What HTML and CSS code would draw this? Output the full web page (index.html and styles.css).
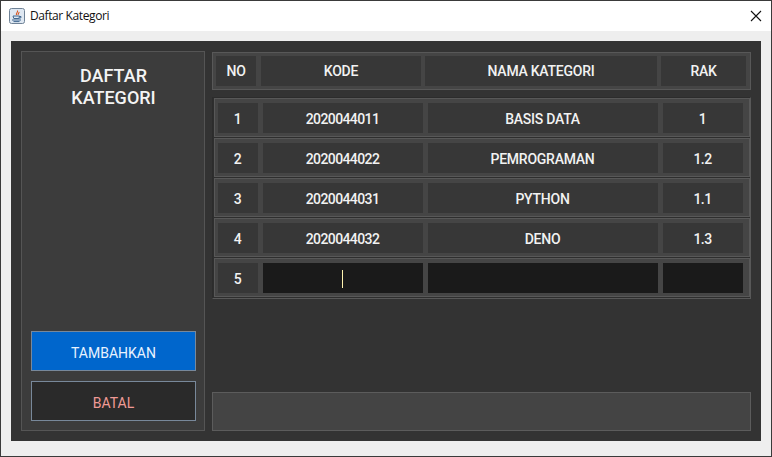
FILE: index.html

```html
<!DOCTYPE html>
<html>
<head>
  <meta charset="UTF-8">
  <title>Daftar Kategori</title>
  <link rel="stylesheet" href="styles.css">
</head>
<body>

<div class="window">
  <div class="titlebar">
    <svg class="appIcon" width="16" height="16" viewBox="0 0 16 16">
      <rect x="0.5" y="0.5" width="15" height="15" rx="2" fill="#dfe8f2" stroke="#6f8296"/>
      <path d="M8.500 2.500c1 1.500-2 2.500-1 4.500M10 4c.5 1-1.500 1.500-.8 3" fill="none" stroke="#d9541e" stroke-width="1.100"/>
      <path d="M4 8h6.500l-.6 2.500H4.800zM10.500 8.500h1.500v1.200l-1.800.6" fill="none" stroke="#41678f"/>
      <path d="M3 12h9M4.500 13.600h6" stroke="#41678f"/>
    </svg>
    <span class="titleText">Daftar Kategori</span>
    <svg class="closeIcon" width="12" height="12" viewBox="0 0 12 12">
      <path d="M1 1l10 10M11 1L1 11" stroke="#111" stroke-width="1.100" fill="none"/>
    </svg>
  </div>

  <div class="content">
    <div class="panel">
      <div class="sidePanel">
        <h2 class="sideTitle">DAFTAR<br>KATEGORI</h2>
        <button class="btn btnAdd">TAMBAHKAN</button>
        <button class="btn btnCancel">BATAL</button>
      </div>

      <div class="mainPanel">
        <div class="headRow">
          <div class="cell">NO</div>
          <div class="cell">KODE</div>
          <div class="cell">NAMA KATEGORI</div>
          <div class="cell">RAK</div>
        </div>

        <div class="tableBody">
          <div class="row">
            <div class="cell num">1</div>
            <div class="cell num">2020044011</div>
            <div class="cell">BASIS DATA</div>
            <div class="cell num">1</div>
          </div>
          <div class="row">
            <div class="cell num">2</div>
            <div class="cell num">2020044022</div>
            <div class="cell">PEMROGRAMAN</div>
            <div class="cell num">1.2</div>
          </div>
          <div class="row">
            <div class="cell num">3</div>
            <div class="cell num">2020044031</div>
            <div class="cell">PYTHON</div>
            <div class="cell num">1.1</div>
          </div>
          <div class="row">
            <div class="cell num">4</div>
            <div class="cell num">2020044032</div>
            <div class="cell">DENO</div>
            <div class="cell num">1.3</div>
          </div>
          <div class="row">
            <div class="cell num">5</div>
            <div class="cell cellInput"><span class="caret"></span></div>
            <div class="cell cellInput"></div>
            <div class="cell cellInput"></div>
          </div>
        </div>

        <div class="messageBar"></div>
      </div>
    </div>
  </div>
</div>

</body>
</html>
```

FILE: styles.css

```css
body, html {
  margin: 0;
  padding: 0;
  height: 100%;
  font-family: Roboto, "Liberation Sans", sans-serif;
  background: #eeeeee;
}
.window {
  height: 457px;
  box-sizing: border-box;
  display: flex;
  flex-direction: column;
  border: 1px solid #3a3a3a;
  overflow: hidden;
}
.titlebar {
  height: 30px;
  box-sizing: border-box;
  flex: none;
  display: flex;
  align-items: center;
  background: white;
  padding: 0 9px 1px 8px;
}
.appIcon {
  flex: none;
}
.titleText {
  margin-left: 5px;
  font-family: "Open Sans", sans-serif;
  font-size: 12px;
  letter-spacing: -0.4px;
  color: #111;
}
.closeIcon {
  margin-left: auto;
}
.content {
  flex: 1;
  min-height: 0;
  display: flex;
  padding: 10px 10px 15px;
}
.panel {
  flex: 1;
  display: flex;
  gap: 7px;
  padding: 10px;
  background: #333333;
}
.sidePanel {
  width: 184px;
  box-sizing: border-box;
  display: flex;
  flex-direction: column;
  gap: 10px;
  padding: 10px 8px 9px 9px;
  background: #3c3c3c;
  border: 1px solid #555555;
}
.sideTitle {
  margin: 3px 0 auto;
  font-size: 18px;
  font-weight: 500;
  line-height: 22px;
  text-align: center;
  color: #f4f4f4;
}
.btn {
  height: 40px;
  flex: none;
  padding: 4px 0 0;
  font-family: inherit;
  font-size: 14px;
  font-weight: 400;
  border: 1px solid #78889a;
}
.btnAdd {
  background: #0066cc;
  color: #e8f2ff;
}
.btnCancel {
  background: #2a2a2a;
  color: #f09a96;
}
.mainPanel {
  flex: 1;
  min-width: 0;
  display: flex;
  flex-direction: column;
  padding-top: 1px;
}
.cell {
  display: flex;
  align-items: center;
  justify-content: center;
  background: #373737;
  color: #f2f2f2;
  font-size: 14px;
  font-weight: 500;
  letter-spacing: -0.25px;
}
.num {
  letter-spacing: -0.6px;
}
.headRow {
  height: 38px;
  box-sizing: border-box;
  flex: none;
  display: grid;
  grid-template-columns: 41px 160px 232px 85px;
  column-gap: 4px;
  padding: 3px;
  background: #454545;
  border: 1px solid #585858;
}
.headRow .cell:first-child {
  margin-right: 1px;
}
.tableBody {
  flex: none;
  height: 202px;
  box-sizing: border-box;
  margin-top: 7px;
  padding-left: 1px;
  background: #2e2e2e;
  border: 1px solid #585858;
  border-top-color: #2c2c2c;
  border-left-color: #2c2c2c;
}
.row {
  height: 39px;
  box-sizing: border-box;
  margin-bottom: 1px;
  display: grid;
  grid-template-columns: 40px 160px 230px 80px;
  column-gap: 5px;
  padding: 4px 5px 3px 3px;
  background: #454545;
  border: 1px solid #585858;
}
.row .cell {
  padding-top: 1px;
  padding-right: 1px;
  box-sizing: border-box;
}
.cellInput {
  background: #1a1a1a;
}
.caret {
  width: 1px;
  height: 18px;
  margin-right: 1px;
  background: #fff4b0;
}
.messageBar {
  margin-top: auto;
  height: 39px;
  box-sizing: border-box;
  flex: none;
  background: #444444;
  border: 1px solid #5c5c5c;
}
```
